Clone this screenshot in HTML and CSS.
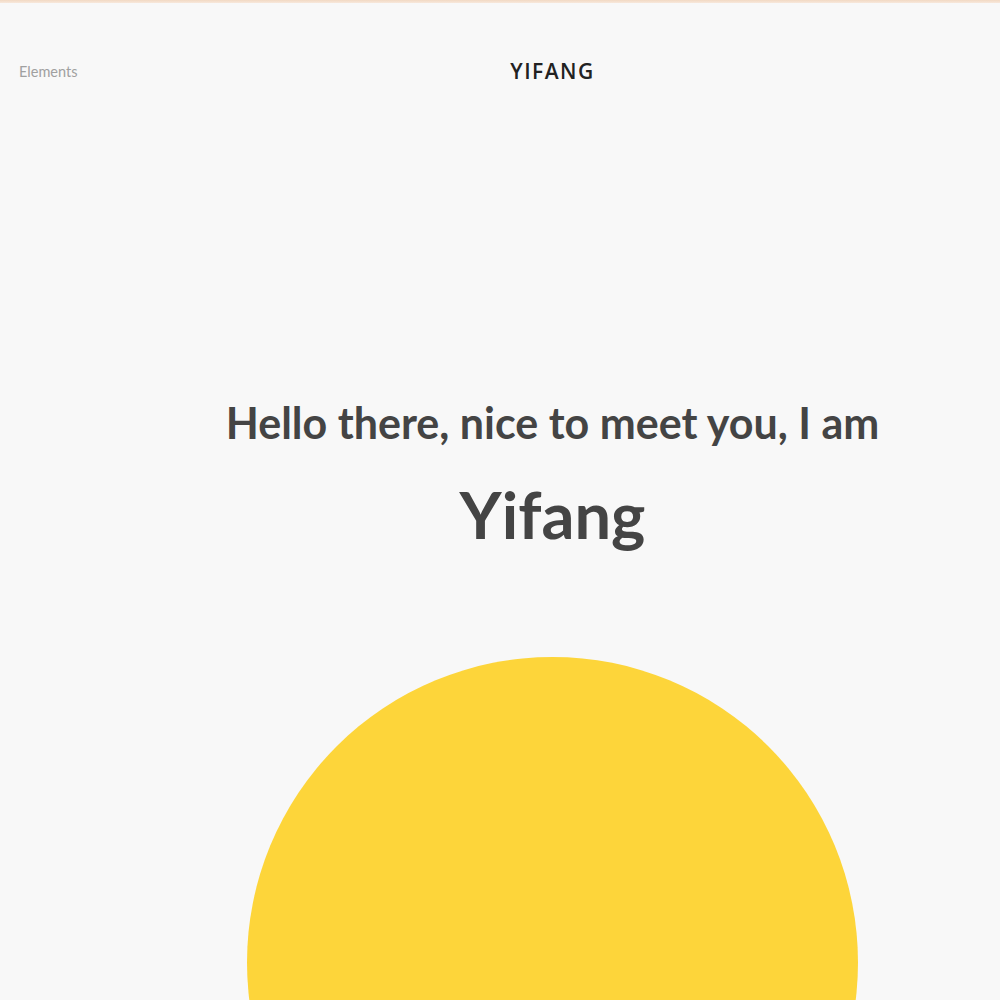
FILE: index.html
```html
<!DOCTYPE html>
<html>
<head>
<meta charset="utf-8">
<link rel="stylesheet" href="styles.css">
</head>
<body>
<div class="topline"></div>
<div class="page">
  <aside class="side">
    <span class="side-link">Elements</span>
  </aside>
  <main class="main">
    <header class="brand">YIFANG</header>
    <section class="hero">
      <h2 class="greeting">Hello there, nice to meet you, I am</h2>
      <h1 class="name">Yifang</h1>
      <div class="sun"></div>
    </section>
  </main>
</div>
</body>
</html>
```
FILE: styles.css
```css
html, body {
  margin: 0;
  padding: 0;
  background: #f8f8f8;
  overflow: hidden;
  height: 1000px;
}
.topline {
  height: 3px;
  background: linear-gradient(#f2d9c3, #f7e8dc);
}
.page {
  display: grid;
  grid-template-columns: 105px 1fr;
}
.side {
  padding: 60px 0 0 19px;
}
.side-link {
  font-family: Lato, "Liberation Sans", sans-serif;
  font-size: 14.5px;
  color: #a0a0a0;
}
.main {
  display: flex;
  flex-direction: column;
  align-items: center;
}
.brand {
  margin-top: 56px;
  font-family: "Open Sans", "Liberation Sans", sans-serif;
  font-weight: 600;
  font-size: 21px;
  letter-spacing: 1.5px;
  color: #222;
  line-height: 24px;
}
.hero {
  display: flex;
  flex-direction: column;
  align-items: center;
  margin-top: 314px;
}
.greeting {
  margin: 0;
  font-family: Lato, "Liberation Sans", sans-serif;
  font-weight: 700;
  font-size: 43px;
  line-height: 52px;
  color: #444;
}
.name {
  margin: 30px 0 0;
  font-family: Lato, "Liberation Sans", sans-serif;
  font-weight: 700;
  font-size: 65px;
  line-height: 70px;
  color: #444;
}
.sun {
  margin-top: 108px;
  width: 611px;
  height: 611px;
  border-radius: 50%;
  background: #fdd53a;
}
```
